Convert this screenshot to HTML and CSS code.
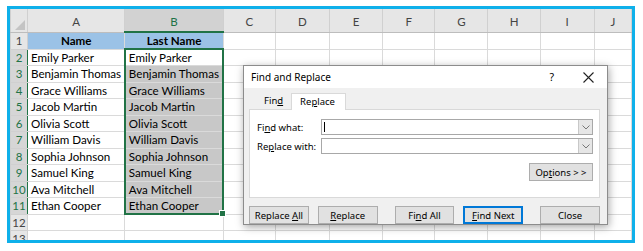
FILE: index.html
```html
<!DOCTYPE html>
<html lang="en">
  <head>
    <meta charset="UTF-8" />
    <meta name="viewport" content="width=device-width, initial-scale=1.0" />
    <title>Find and Replace</title>
    <link rel="stylesheet" href="styles.css">
  </head>
  <body>
    <div class="frame">
      <table class="sheet">
        <colgroup>
          <col class="c-rh"><col class="c-a"><col class="c-b"><col class="c-c"><col class="c-d"><col class="c-e"><col class="c-f"><col class="c-g"><col class="c-h"><col class="c-i"><col class="c-j">
        </colgroup>
        <tr class="head">
          <th class="corner"></th><th>A</th><th class="csel">B</th><th>C</th><th>D</th><th>E</th><th>F</th><th>G</th><th>H</th><th>I</th><th>J</th>
        </tr>
        <tr>
          <th class="rh">1</th><td class="title">Name</td><td class="title">Last Name</td><td></td><td></td><td></td><td></td><td></td><td></td><td></td><td></td>
        </tr>
        <tr>
          <th class="rh rsel">2</th><td>Emily Parker</td><td class="sel sel-top">Emily Parker</td><td></td><td></td><td></td><td></td><td></td><td></td><td></td><td></td>
        </tr>
        <tr>
          <th class="rh rsel">3</th><td>Benjamin Thomas</td><td class="sel">Benjamin Thomas</td><td></td><td></td><td></td><td></td><td></td><td></td><td></td><td></td>
        </tr>
        <tr>
          <th class="rh rsel">4</th><td>Grace Williams</td><td class="sel">Grace Williams</td><td></td><td></td><td></td><td></td><td></td><td></td><td></td><td></td>
        </tr>
        <tr>
          <th class="rh rsel">5</th><td>Jacob Martin</td><td class="sel">Jacob Martin</td><td></td><td></td><td></td><td></td><td></td><td></td><td></td><td></td>
        </tr>
        <tr>
          <th class="rh rsel">6</th><td>Olivia Scott</td><td class="sel">Olivia Scott</td><td></td><td></td><td></td><td></td><td></td><td></td><td></td><td></td>
        </tr>
        <tr>
          <th class="rh rsel">7</th><td>William Davis</td><td class="sel">William Davis</td><td></td><td></td><td></td><td></td><td></td><td></td><td></td><td></td>
        </tr>
        <tr>
          <th class="rh rsel">8</th><td>Sophia Johnson</td><td class="sel">Sophia Johnson</td><td></td><td></td><td></td><td></td><td></td><td></td><td></td><td></td>
        </tr>
        <tr>
          <th class="rh rsel">9</th><td>Samuel King</td><td class="sel">Samuel King</td><td></td><td></td><td></td><td></td><td></td><td></td><td></td><td></td>
        </tr>
        <tr>
          <th class="rh rsel">10</th><td>Ava Mitchell</td><td class="sel">Ava Mitchell</td><td></td><td></td><td></td><td></td><td></td><td></td><td></td><td></td>
        </tr>
        <tr>
          <th class="rh rsel">11</th><td>Ethan Cooper</td><td class="sel sel-end">Ethan Cooper</td><td></td><td></td><td></td><td></td><td></td><td></td><td></td><td></td>
        </tr>
        <tr>
          <th class="rh">12</th><td></td><td></td><td></td><td></td><td></td><td></td><td></td><td></td><td></td><td></td>
        </tr>
        <tr>
          <th class="rh">13</th><td></td><td></td><td></td><td></td><td></td><td></td><td></td><td></td><td></td><td></td>
        </tr>
      </table>

      <div class="dialog">
        <div class="titlebar">
          <span class="dlg-title">Find and Replace</span>
          <span class="help">?</span>
          <svg class="close-x" width="11" height="11" viewBox="0 0 11 11">
            <path d="M0.5 0.5 L10.5 10.5 M10.5 0.5 L0.5 10.5" stroke="#222" stroke-width="1.1" fill="none" />
          </svg>
        </div>
        <div class="dlg-body">
          <div class="tabs">
            <span class="tab">Fin<u>d</u></span>
            <span class="tab active">Re<u>p</u>lace</span>
          </div>
          <div class="panel">
            <div class="field">
              <label>Fi<u>n</u>d what:</label>
              <div class="combo">
                <span class="caret"></span>
                <span class="drop"><svg width="8" height="5" viewBox="0 0 8 5"><path d="M0.5 0.5 L4 4 L7.5 0.5" stroke="#777" fill="none" /></svg></span>
              </div>
            </div>
            <div class="field">
              <label>Re<u>p</u>lace with:</label>
              <div class="combo">
                <span class="drop"><svg width="8" height="5" viewBox="0 0 8 5"><path d="M0.5 0.5 L4 4 L7.5 0.5" stroke="#777" fill="none" /></svg></span>
              </div>
            </div>
            <div class="options-row">
              <button class="btn options">Op<u>t</u>ions &gt; &gt;</button>
            </div>
          </div>
          <div class="actions">
            <button class="btn">Replace <u>A</u>ll</button>
            <button class="btn"><u>R</u>eplace</button>
            <button class="btn gap">Fi<u>n</u>d All</button>
            <button class="btn primary"><u>F</u>ind Next</button>
            <button class="btn gap">Close</button>
          </div>
        </div>
      </div>
    </div>
  </body>
</html>
```

FILE: styles.css
```css
body {
  margin: 0;
  background: #fff;
}
.frame {
  position: relative;
  margin: 6px 0 0 7px;
  width: 622px;
  height: 231px;
  border: 3px solid #0fb0ea;
  overflow: hidden;
}
.sheet {
  border-collapse: collapse;
  table-layout: fixed;
  width: 622px;
  font-family: Lato, "Liberation Sans", sans-serif;
  font-size: 11.6px;
  color: #000;
}
.c-rh { width: 17px; }
.c-a { width: 97px; }
.c-b { width: 98px; }
.c-c { width: 52px; }
.c-d { width: 54px; }
.c-e { width: 53px; }
.c-f { width: 52px; }
.c-g { width: 53px; }
.c-h { width: 52px; }
.c-i { width: 54px; }
.c-j { width: 37px; }
.sheet tr {
  height: 16.5px;
}
.sheet tr.head {
  height: 23px;
}
.sheet td {
  border: 1px solid #dadada;
  padding: 1px 0 0 3px;
  white-space: nowrap;
  overflow: hidden;
  line-height: 14px;
}
.sheet th {
  background: #e6e6e6;
  border: 1px solid #d0d0d0;
  font-weight: normal;
  color: #444;
  padding: 0;
  font-size: 11.5px;
}
.head th {
  border-top: none;
  border-bottom: 1px solid #bdbdbd;
  padding-top: 3px;
}
.head th.csel {
  background: #d2d2d2;
  color: #217346;
  border-bottom: 2px solid #217346;
}
.corner {
  position: relative;
}
.corner::after {
  content: "";
  position: absolute;
  right: 2px;
  bottom: 2px;
  border-style: solid;
  border-width: 0 0 10px 10px;
  border-color: transparent transparent #c4c4c4 transparent;
}
.rh {
  text-align: center;
  border-left: none;
}
.rh.rsel {
  background: #d6d6d6;
  color: #217346;
  border-right: 1px solid #217346;
}
td.title {
  background: #9bc2e6;
  font-weight: bold;
  text-align: center;
  padding: 1px 0 0;
}
td.sel {
  background: #c8c8c8;
  border-left: 2px solid #217346;
  border-right: 2px solid #217346;
}
td.sel-top {
  background: #fff;
  border-top: 2px solid #217346;
}
td.sel-end {
  border-bottom: 2px solid #217346;
  position: relative;
  overflow: visible;
}
td.sel-end::after {
  content: "";
  position: absolute;
  right: -4px;
  bottom: -4px;
  width: 5px;
  height: 5px;
  background: #217346;
  border: 1px solid #fff;
}

/* dialog */
.dialog {
  position: absolute;
  left: 233px;
  top: 56px;
  width: 363px;
  height: 158px;
  border: 1px solid #8c8c8c;
  background: #f0f0f0;
  box-shadow: 1px 2px 8px rgba(0, 0, 0, 0.35);
  font-family: "Noto Sans", "Open Sans", sans-serif;
  font-size: 9.5px;
  color: #000;
  display: flex;
  flex-direction: column;
}
.titlebar {
  height: 26px;
  background: #fff;
  display: flex;
  align-items: center;
  padding: 0 13px 0 7px;
}
.dlg-title {
  flex: 1;
  font-size: 10px;
}
.help {
  margin-right: 29px;
  font-size: 10.5px;
}
.dlg-body {
  flex: 1;
  padding: 5px 7px 0 5px;
  display: flex;
  flex-direction: column;
}
.tabs {
  display: flex;
  align-items: flex-end;
  height: 16px;
  padding-left: 8px;
}
.tab {
  padding: 0 8px 1px 7px;
  height: 14px;
  line-height: 14px;
}
.tab.active {
  background: #fff;
  border: 1px solid #d9d9d9;
  border-bottom: none;
  height: 16px;
  line-height: 15px;
  padding: 0 10px 0 8px;
  position: relative;
  top: 1px;
}
.panel {
  background: #fff;
  border: 1px solid #d9d9d9;
  height: 78px;
  padding: 9px 6px 0 7px;
  display: flex;
  flex-direction: column;
  gap: 3px;
}
.field {
  display: flex;
  align-items: center;
  height: 16px;
}
.field label {
  width: 64px;
}
.combo {
  flex: 1;
  height: 14px;
  border: 1px solid #a8a8a8;
  background: #fff;
  display: flex;
  justify-content: space-between;
  align-items: stretch;
}
.caret {
  width: 1px;
  margin: 2px 0 2px 2px;
  background: #000;
}
.drop {
  margin-left: auto;
  width: 13px;
  background: #e6e6e6;
  border-left: 1px solid #c8c8c8;
  display: flex;
  align-items: center;
  justify-content: center;
}
.options-row {
  display: flex;
  justify-content: flex-end;
  margin-top: 6px;
}
.btn {
  font: inherit;
  height: 18px;
  padding: 0;
  background: #e1e1e1;
  border: 1px solid #adadad;
  color: #000;
  width: 61px;
}
.btn.options {
  width: 64px;
}
.actions {
  display: flex;
  margin-top: 8px;
  gap: 9px;
}
.btn.gap {
  margin-left: 8px;
}
.btn.primary {
  border: 2px solid #0078d7;
}
```
